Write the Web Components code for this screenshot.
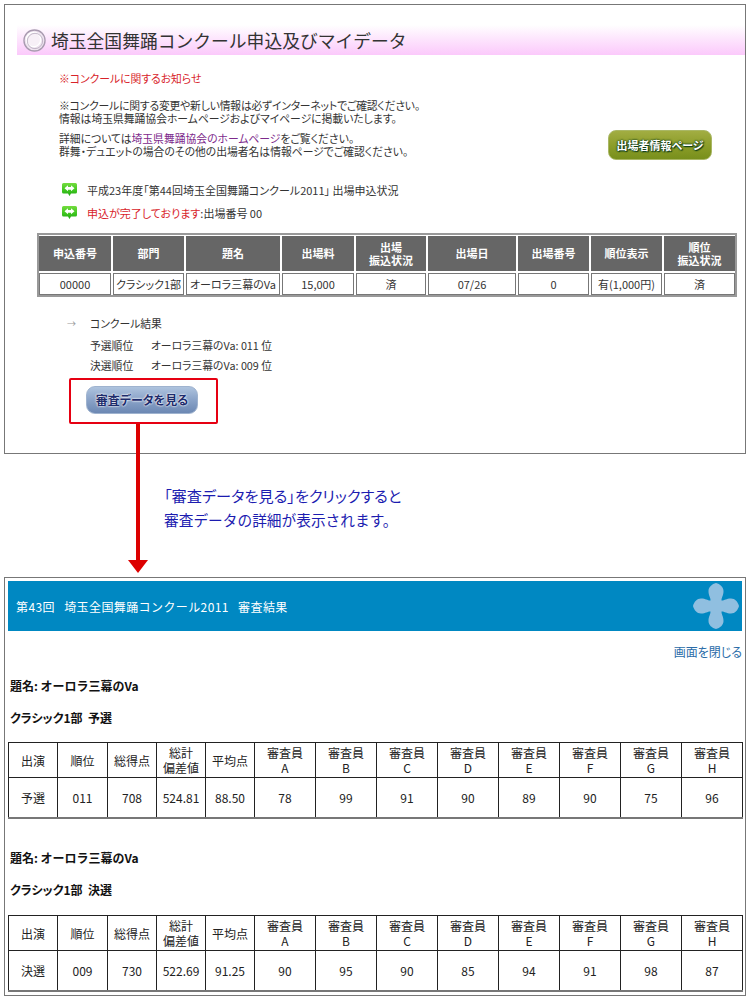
<!DOCTYPE html>
<html lang="ja">
<head>
<meta charset="utf-8">
<title>審査データ</title>
<style>
  html, body { margin: 0; background: #fff; }
  body {
    width: 750px;
    height: 1008px;
    overflow: hidden;
    font-family: "Noto Sans CJK JP", "Liberation Sans", sans-serif;
    color: #333;
  }
</style>
</head>
<body>
<guide-page>
  <mydata-panel slot="top"></mydata-panel>
  <span slot="note"><span style="font-size:15.2px;font-feature-settings:'palt'">「審査データを見る」をクリックすると</span><br><span style="font-size:14.7px;font-feature-settings:normal">審査データの詳細が表示されます。</span></span>
  <result-panel slot="bottom"></result-panel>
</guide-page>

<script>
class GuidePage extends HTMLElement {
  constructor() {
    super();
    this.attachShadow({ mode: 'open' });
    this.shadowRoot.innerHTML = `
      <style>
        :host { display: block; position: relative; padding: 4px 4px 0 4px; height: 1004px; }
        .note {
          height: 123px;
          box-sizing: border-box;
          padding: 29px 0 0 160px;
          line-height: 24px;
          color: #1c1cb0;
        }
        /* arrow runs over the panel border, from the red box down to the second panel */
        .arrow { position: absolute; left: 128px; top: 424px; width: 20px; height: 150px; }
      </style>
      <slot name="top"></slot>
      <div class="note"><slot name="note"></slot></div>
      <slot name="bottom"></slot>
      <svg class="arrow" viewBox="0 0 20 150">
        <rect x="8" y="0" width="4" height="137" fill="#dc0000"/>
        <path d="M0 136H20L10 149Z" fill="#dc0000"/>
      </svg>
    `;
  }
}

class MydataPanel extends HTMLElement {
  constructor() {
    super();
    this.attachShadow({ mode: 'open' });
    this.shadowRoot.innerHTML = `
      <style>
        :host {
          display: block;
          box-sizing: border-box;
          width: 742px;
          height: 450px;
          border: 1px solid #777;
          padding-top: 20px;
          font-size: 10.8px;
          font-feature-settings: "palt";
          color: #333;
        }
        .band {
          margin-left: 12px;
          height: 30px;
          display: flex;
          align-items: center;
          gap: 5px;
          padding-left: 6px;
          background: linear-gradient(#fff, #fde6fd 45%, #fbc9fb);
          font-size: 17.8px;
          color: #333;
          font-feature-settings: normal;
          white-space: nowrap;
        }
        .body { padding: 17px 0 0 54px; }
        p { margin: 0; line-height: 13px; }
        .red { color: #d8232a; }
        .link { color: #7d2a8c; }
        .tight { letter-spacing: -.18px; }
        .notice { display: flex; justify-content: space-between; align-items: flex-start; padding-right: 33px; margin-top: 14px; }
        .notice pill-button { margin-top: 31px; }
        .status { display: flex; flex-direction: column; gap: 10px; margin: 23px 0 0 3px; }
        .status div { display: flex; align-items: center; gap: 9px; height: 13px; font-size: 11px; }
        .table-wrap { margin: 14px 0 0 32px; }
        .results { margin: 20px 0 0 85px; }
        .row { display: flex; height: 13px; line-height: 13px; }
        .k { width: 61px; }
        .first { margin: 0 0 9px -23px; }
        .first i { width: 23px; font-style: normal; color: #999; font-size: 9px; }
        .second { margin-bottom: 7px; }
        .mark { margin: 6px 0 0 -21px; width: 149px; height: 46px; box-sizing: border-box;
                border: 2px solid #e60012; border-radius: 2px; padding: 6px 0 0 15px; }
      </style>
      <div class="band">
        <svg width="23" height="23" viewBox="0 0 24 24">
          <circle cx="12" cy="12" r="11" fill="#efe4f0" stroke="#a99bb0" stroke-width="1.4"/>
          <circle cx="11" cy="11" r="7.5" fill="#f7f0f7" stroke="#fff" stroke-width="1.4"/>
          <circle cx="12.500" cy="12.500" r="8" fill="none" stroke="#b3a6ba" stroke-width=".8"/>
        </svg>
        <span>埼玉全国舞踊コンクール申込及びマイデータ</span>
      </div>
      <div class="body">
        <p class="red">※コンクールに関するお知らせ</p>
        <div class="notice">
          <div>
            <p><span class="tight">※コンクールに関する変更や新しい情報は必ずインターネットでご確認ください。</span><br>情報は埼玉県舞踊協会ホームページおよびマイページに掲載いたします。</p>
            <p style="margin-top:7px">詳細については<span class="link">埼玉県舞踊協会のホームページ</span>をご覧ください。<br>群舞・デュエットの場合のその他の出場者名は情報ページでご確認ください。</p>
          </div>
          <pill-button tone="green">出場者情報ページ</pill-button>
        </div>
        <div class="status">
          <div><chat-icon></chat-icon><span>平成23年度「第44回埼玉全国舞踊コンクール2011」 出場申込状況</span></div>
          <div><chat-icon></chat-icon><span><span class="red">申込が完了しております</span>:出場番号 00</span></div>
        </div>
      </div>
      <div class="table-wrap"><entry-table></entry-table></div>
      <div class="results">
        <div class="row first"><i>→</i><span>コンクール結果</span></div>
        <div class="row second"><span class="k">予選順位</span><span>オーロラ三幕のVa: 011 位</span></div>
        <div class="row"><span class="k">決選順位</span><span>オーロラ三幕のVa: 009 位</span></div>
        <div class="mark"><pill-button tone="blue">審査データを見る</pill-button></div>
      </div>
    `;
  }
}

class ChatIcon extends HTMLElement {
  constructor() {
    super();
    this.attachShadow({ mode: 'open' });
    this.shadowRoot.innerHTML = `
      <style>:host { display: inline-flex; width: 16px; height: 14px; }</style>
      <svg width="16" height="14" viewBox="0 0 16 14">
        <defs><linearGradient id="c" x1="0" y1="0" x2="0" y2="1">
          <stop offset="0" stop-color="#74dc3e"/><stop offset=".6" stop-color="#3cc41e"/><stop offset="1" stop-color="#22a814"/>
        </linearGradient></defs>
        <path d="M1.500 0H13.500Q15 0 15 1.500V9Q15 10.500 13.500 10.500H9L7.500 13L6 10.500H1.500Q0 10.500 0 9V1.500Q0 0 1.500 0Z" fill="url(#c)"/>
        <path d="M2.500 5.300L6 2.300V3.900H9V2.300L12.500 5.300L9 8.300V6.700H6V8.300Z" fill="#fff"/>
      </svg>
    `;
  }
}

class PillButton extends HTMLElement {
  constructor() {
    super();
    this.attachShadow({ mode: 'open' });
    this.shadowRoot.innerHTML = `
      <style>
        :host {
          display: inline-flex;
          align-items: center;
          justify-content: center;
          box-sizing: border-box;
          font-weight: 700;
          white-space: nowrap;
          flex: none;
        }
        :host([tone="green"]) {
          width: 104px; height: 30px; border-radius: 8px; font-size: 11px; color: #fff;
          background: linear-gradient(#a2ad42, #8a9c28 55%, #788f1c);
          border: 1px solid #a9b765;
          text-shadow: 0 0 2px #0f3d1a, 0 0 2px #0f3d1a, 1px 1px 1px #0f3d1a;
        }
        :host([tone="blue"]) {
          width: 112px; height: 28px; border-radius: 9px; font-size: 12px; color: #1d2c6c;
          padding-bottom: 2px;
          background: linear-gradient(#aec3de, #8aa3c8 50%, #6c88b3);
          border: 1px solid #9fb3cf;
          text-shadow: 0 0 2px #fff, 0 0 2px #fff;
        }
      </style>
      <slot></slot>
    `;
  }
}

class EntryTable extends HTMLElement {
  constructor() {
    super();
    this.attachShadow({ mode: 'open' });
    const heads = ['申込番号', '部門', '題名', '出場料', '出場<br>振込状況', '出場日', '出場番号', '順位表示', '順位<br>振込状況'];
    const vals = ['00000', 'クラシック1部', 'オーロラ三幕のVa', '15,000', '済', '07/26', '0', '有(1,000円)', '済'];
    this.shadowRoot.innerHTML = `
      <style>
        :host { display: block; width: 700px; }
        .grid {
          display: grid;
          grid-template-columns: 72px 71px 94px 72px 70px 88px 71px 71px 71px;
          grid-template-rows: 35px 22px;
          column-gap: 2px;
          row-gap: 2px;
          border: 2px solid #999;
          padding: 1px 0;
          box-sizing: border-box;
          height: 64px;
          font-size: 11px;
          font-feature-settings: "palt";
        }
        .h, .d { display: flex; align-items: center; justify-content: center; text-align: center; line-height: 13px; white-space: nowrap; }
        .h { background: #666; color: #fff; font-weight: 700; }
        .d { border: 1px solid #777; color: #333; box-sizing: border-box; }
      </style>
      <div class="grid">
        ${heads.map(h => `<div class="h">${h}</div>`).join('')}
        ${vals.map(v => `<div class="d">${v}</div>`).join('')}
      </div>
    `;
  }
}

class ResultPanel extends HTMLElement {
  constructor() {
    super();
    this.attachShadow({ mode: 'open' });
    this.shadowRoot.innerHTML = `
      <style>
        :host {
          display: block;
          box-sizing: border-box;
          width: 742px;
          height: 419px;
          border: 1px solid #777;
          padding: 3px;
        }
        .band {
          height: 50px;
          width: 734px;
          background: #0088c2;
          color: #fff;
          font-size: 12px;
          letter-spacing: .4px;
          display: flex;
          align-items: center;
          justify-content: space-between;
          padding: 0 3px 0 8px;
          box-sizing: border-box;
        }
        .close { text-align: right; font-size: 12px; line-height: 14px; color: #2a6ca8; margin-top: 14px; width: 734px; font-feature-settings: "palt"; }
      </style>
      <div class="band">
        <span>第43回&nbsp;&nbsp; 埼玉全国舞踊コンクール2011&nbsp;&nbsp; 審査結果</span>
        <svg width="46" height="46" viewBox="0 0 46 46" fill="#90bfe0">
          <path d="M17.500 17C17.500 14 15.500 13 15.500 8C15.500 4 19 1 23 0C27 1 30.500 4 30.500 8C30.500 13 28.500 14 28.500 17.500C32 17.500 33 15.500 38 15.500C42 15.500 45 19 46 23C45 27 42 30.500 38 30.500C33 30.500 32 28.500 28.500 28.500C28.500 32 30.500 33 30.500 38C30.500 42 27 45 23 46C19 45 15.500 42 15.500 38C15.500 33 17.500 32 17.500 28.500C14 28.500 13 30.500 8 30.500C4 30.500 1 27 0 23C1 19 4 15.500 8 15.500C13 15.500 14 17.500 17.500 17.500Z"/>
        </svg>
      </div>
      <div class="close">画面を閉じる</div>
      <score-table stage="予選" rank="011" total="708" dev="524.81" avg="88.50" scores="78,99,91,90,89,90,75,96" style="margin-top:20px"></score-table>
      <score-table stage="決選" rank="009" total="730" dev="522.69" avg="91.25" scores="90,95,90,85,94,91,98,87" style="margin-top:32px;--gap:18px"></score-table>
    `;
  }
}

class ScoreTable extends HTMLElement {
  constructor() {
    super();
    this.attachShadow({ mode: 'open' });
  }
  connectedCallback() {
    const a = n => this.getAttribute(n);
    const judges = 'ABCDEFGH'.split('');
    const scores = a('scores').split(',');
    this.shadowRoot.innerHTML = `
      <style>
        :host { display: block; font-size: 12px; color: #222; }
        .t { padding-left: 2px; font-weight: 700; font-size: 12px; line-height: 14px; color: #111; }
        .t + .t { margin-top: 18px; font-feature-settings: "palt"; }
        table {
          margin-top: var(--gap, 17px);
          border-collapse: collapse;
          table-layout: fixed;
          width: 734px;
          line-height: 15px;
          text-align: center;
          border-bottom: 2px solid #777;
        }
        td { border: 1px solid #222; padding: 0; }
        tr:first-child td { height: 34px; }
        tr:last-child td { height: 39px; }
      </style>
      <div class="t">題名: オーロラ三幕のVa</div>
      <div class="t">クラシック1部&nbsp; ${a('stage')}</div>
      <table>
        <colgroup>
          <col style="width:49px"><col style="width:50px"><col style="width:49px"><col style="width:49px"><col style="width:49px">
          ${judges.map(() => '<col style="width:61px">').join('')}
        </colgroup>
        <tr>
          <td>出演</td><td>順位</td><td>総得点</td><td>総計<br>偏差値</td><td>平均点</td>
          ${judges.map(j => `<td>審査員<br>${j}</td>`).join('')}
        </tr>
        <tr>
          <td>${a('stage')}</td><td>${a('rank')}</td><td>${a('total')}</td><td>${a('dev')}</td><td>${a('avg')}</td>
          ${scores.map(s => `<td>${s}</td>`).join('')}
        </tr>
      </table>
    `;
  }
}

customElements.define('pill-button', PillButton);
customElements.define('chat-icon', ChatIcon);
customElements.define('entry-table', EntryTable);
customElements.define('score-table', ScoreTable);
customElements.define('mydata-panel', MydataPanel);
customElements.define('result-panel', ResultPanel);
customElements.define('guide-page', GuidePage);
</script>
</body>
</html>
